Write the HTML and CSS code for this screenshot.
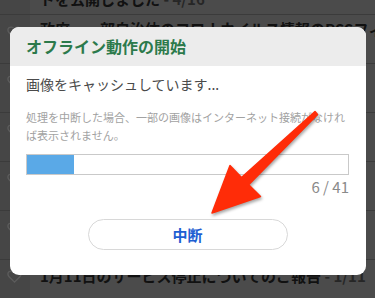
FILE: index.html
```html
<!DOCTYPE html>
<html lang="ja">
<head>
<meta charset="utf-8">
<link rel="stylesheet" href="styles.css">
</head>
<body>
<div class="page">
  <div class="list">
    <div class="row row-first">
      <div class="side"></div>
      <div class="title">ドを公開しました<span class="date"> - 4/16</span></div>
    </div>
    <div class="row">
      <div class="side"><svg class="fav" viewBox="0 0 16 16"><path d="M8 14 L2 8 Q0 5 2 3 Q5 1 8 4 Q11 1 14 3 Q16 5 14 8 Z"/></svg></div>
      <div class="title">政府、一部自治体のコロナウイルス情報のRSSフィード</div>
    </div>
    <div class="row">
      <div class="side"><svg class="fav" viewBox="0 0 16 16"><path d="M8 14 L2 8 Q0 5 2 3 Q5 1 8 4 Q11 1 14 3 Q16 5 14 8 Z"/></svg></div>
      <div class="title">オフライン機能</div>
    </div>
    <div class="row">
      <div class="side"><svg class="fav" viewBox="0 0 16 16"><path d="M8 14 L2 8 Q0 5 2 3 Q5 1 8 4 Q11 1 14 3 Q16 5 14 8 Z"/></svg></div>
      <div class="title">お知らせ</div>
    </div>
    <div class="row">
      <div class="side"><svg class="fav" viewBox="0 0 16 16"><path d="M8 14 L2 8 Q0 5 2 3 Q5 1 8 4 Q11 1 14 3 Q16 5 14 8 Z"/></svg></div>
      <div class="title">お知らせ</div>
    </div>
    <div class="row">
      <div class="side"><svg class="fav" viewBox="0 0 16 16"><path d="M8 14 L2 8 Q0 5 2 3 Q5 1 8 4 Q11 1 14 3 Q16 5 14 8 Z"/></svg></div>
      <div class="title">お知らせ</div>
    </div>
    <div class="row row-last">
      <div class="side"><svg class="fav" viewBox="0 0 16 16"><path d="M8 14 L2 8 Q0 5 2 3 Q5 1 8 4 Q11 1 14 3 Q16 5 14 8 Z"/></svg></div>
      <div class="title">1月11日のサービス停止についてのご報告<span class="date"> - 1/11</span></div>
    </div>
  </div>

  <div class="dialog">
    <div class="dialog-head">オフライン動作の開始</div>
    <div class="dialog-body">
      <p class="status">画像をキャッシュしています...</p>
      <p class="note">処理を中断した場合、一部の画像はインターネット接続がなければ表示されません。</p>
      <div class="bar"><div class="fill" style="width:14.63%"></div></div>
      <div class="count">6 / 41</div>
      <div class="actions"><button class="btn">中断</button></div>
    </div>
  </div>

  <svg class="arrow" viewBox="0 0 375 298" width="375" height="298">
    <polygon points="315,111.5 241.5,177.5 230,165.5 212,213 260.5,196.5 248.7,184.7 317.5,114.5" />
  </svg>
</div>
</body>
</html>
```
FILE: styles.css
```css
* { box-sizing: border-box; }
html, body {
  margin: 0;
  padding: 0;
}
body {
  width: 375px;
  height: 298px;
  overflow: hidden;
  background: #4b4b4b;
  font-family: "Noto Sans CJK JP", "Noto Sans", sans-serif;
}
.page {
  position: relative;
  width: 375px;
  height: 298px;
  overflow: hidden;
}
.list {
  display: flex;
  flex-direction: column;
}
.row {
  display: flex;
  flex: none;
  height: 49px;
  border-bottom: 1px solid #3b3b3b;
}
.row-first {
  height: 15px;
}
.row-first .title {
  margin-top: -11px;
  padding-top: 0;
}
.row-last .title {
  padding-top: 6px;
}
.row-last .side {
  padding-top: 5px;
}
.side {
  width: 30px;
  flex: none;
  background: #464646;
  padding: 6px 0 0 7px;
}
.fav {
  width: 15px;
  height: 15px;
  fill: none;
  stroke: #5c5c5c;
  stroke-width: 1.4;
}
.title {
  padding: 4px 0 0 10px;
  font-size: 15px;
  line-height: 20px;
  font-weight: bold;
  color: #111111;
  white-space: nowrap;
}
.date {
  color: #262626;
}
.dialog {
  position: absolute;
  left: 10px;
  top: 27px;
  width: 356px;
  height: 248px;
  background: #ffffff;
  border-radius: 9px;
  overflow: hidden;
}
.dialog-head {
  height: 39px;
  background: #ececec;
  padding-left: 16px;
  font-size: 16px;
  line-height: 39px;
  font-weight: bold;
  color: #2c7a4b;
}
.dialog-body {
  padding: 8px 17px 0 16px;
}
.status {
  margin: 0;
  font-size: 14px;
  line-height: 20px;
  color: #4a4a4a;
}
.note {
  margin: 14px 0 0;
  font-size: 11px;
  line-height: 18px;
  color: #a2a2a2;
}
.bar {
  margin-top: 10px;
  height: 21px;
  border: 1px solid #c9c9c9;
  background: #fff;
}
.fill {
  height: 100%;
  background: #5aa9e7;
}
.count {
  margin-top: 2px;
  text-align: right;
  font-size: 15px;
  line-height: 20px;
  color: #8a8a8a;
}
.actions {
  display: flex;
  justify-content: center;
  margin-top: 22px;
}
.btn {
  width: 200px;
  height: 31px;
  border: 1px solid #d8d8d8;
  border-radius: 16px;
  background: #fff;
  font-family: inherit;
  font-size: 15px;
  font-weight: bold;
  color: #1e5fd2;
  padding: 0;
}
.arrow {
  position: absolute;
  left: 0;
  top: 0;
  pointer-events: none;
  filter: drop-shadow(1px 2px 1.5px rgba(0, 0, 0, 0.35));
}
.arrow polygon {
  fill: #ff2c08;
  stroke: #ff2c08;
  stroke-width: 1.5;
  stroke-linejoin: round;
}
```
